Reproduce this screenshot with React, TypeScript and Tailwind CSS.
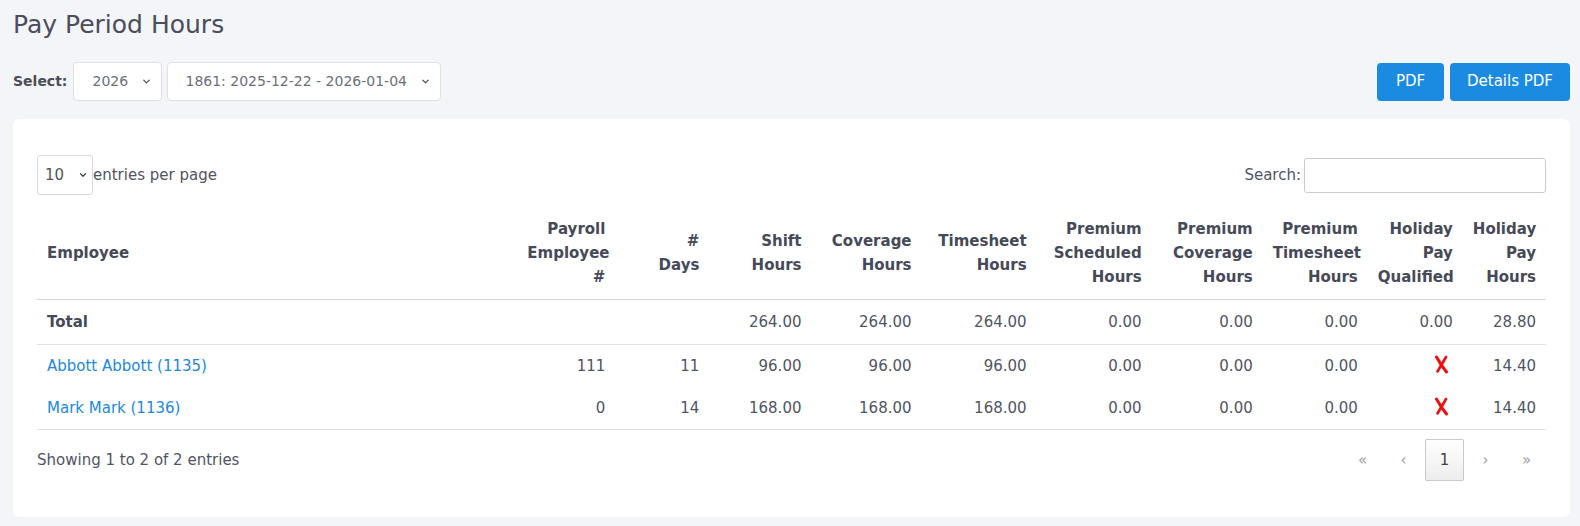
import { ChevronDown } from 'lucide-react';

const font = { fontFamily: '"DejaVu Sans", "Open Sans", sans-serif' };

const headers = [
  { lines: ['Employee'], left: true },
  { lines: ['Payroll', 'Employee', '#'] },
  { lines: ['#', 'Days'] },
  { lines: ['Shift', 'Hours'] },
  { lines: ['Coverage', 'Hours'] },
  { lines: ['Timesheet', 'Hours'] },
  { lines: ['Premium', 'Scheduled', 'Hours'] },
  { lines: ['Premium', 'Coverage', 'Hours'] },
  { lines: ['Premium', 'Timesheet', 'Hours'] },
  { lines: ['Holiday', 'Pay', 'Qualified'] },
  { lines: ['Holiday', 'Pay', 'Hours'] },
];

const widths = [480, 98, 94, 102, 110, 115, 115, 111, 105, 95, 83];

const rows = [
  { name: 'Abbott Abbott (1135)', payroll: '111', days: '11', shift: '96.00', coverage: '96.00', timesheet: '96.00', hol: '14.40' },
  { name: 'Mark Mark (1136)', payroll: '0', days: '14', shift: '168.00', coverage: '168.00', timesheet: '168.00', hol: '14.40' },
];

function RedX() {
  return (
    <svg width="15" height="19" viewBox="0 0 15 19" className="inline-block mr-[4px] align-[-3px]">
      <path d="M2.5 2 C5 6.5, 8 11.5, 12.5 17" stroke="#f20d0d" strokeWidth="3" fill="none" strokeLinecap="round" />
      <path d="M12 2 C9.5 6.5, 6.5 11.5, 3.5 16.5" stroke="#f20d0d" strokeWidth="2.6" fill="none" strokeLinecap="round" />
    </svg>
  );
}

function Select({ value, width, padLeft }: { value: string; width: string; padLeft: string }) {
  return (
    <div className={`${width} h-[39px] bg-white border border-[#dde0e5] rounded-[4px] flex items-center justify-between ${padLeft} pr-[9px] text-[#6b6f7b] text-[14px] whitespace-nowrap`}>
      <span>{value}</span>
      <ChevronDown className="w-[11px] h-[11px] text-[#555] shrink-0" strokeWidth={3} />
    </div>
  );
}

export default function App() {
  return (
    <div className="min-h-[526px] bg-[#f4f5f8] pl-[13px] pr-[10px] pb-[9px] text-[#505462]" style={font}>
      <h1 className="text-[25px] leading-[30px] pt-[10px] text-[#4a4d5a]">Pay Period Hours</h1>

      <div className="flex items-center justify-between mt-[22px]">
        <div className="flex items-center gap-[5px]">
          <span className="font-bold text-[14px] text-[#4a4d5a] mr-[1px]">Select:</span>
          <Select value="2026" width="w-[89px]" padLeft="pl-[18px]" />
          <Select value="1861: 2025-12-22 - 2026-01-04" width="w-[274px]" padLeft="pl-[17px]" />
        </div>
        <div className="flex items-center gap-[6px]">
          <button className="w-[67px] h-[38px] rounded-[4px] bg-[#1b8ae1] text-white text-[15px]">PDF</button>
          <button className="w-[120px] h-[38px] rounded-[4px] bg-[#1b8ae1] text-white text-[15px]">Details PDF</button>
        </div>
      </div>

      <div className="mt-[18px] bg-white rounded-[6px] px-6 pt-[36px] pb-[36px]">
        <div className="flex items-center justify-between">
          <div className="flex items-center">
            <div className="w-[56px] h-[40px] border border-[#d5d8dd] rounded-[3px] flex items-center justify-between pl-[7px] pr-[4px] text-[15px] text-[#555]">
              <span>10</span>
              <ChevronDown className="w-[10px] h-[10px] text-[#444]" strokeWidth={3} />
            </div>
            <span className="text-[15px] text-[#505462]">entries per page</span>
          </div>
          <div className="flex items-center gap-[3px]">
            <span className="text-[15px] text-[#505462]">Search:</span>
            <input className="w-[242px] h-[35px] border border-[#c8ccd2] rounded-[3px] outline-none" />
          </div>
        </div>

        <table className="w-full table-fixed border-collapse mt-[12px] text-[15px]">
          <colgroup>
            {widths.map((w, i) => (
              <col key={i} style={{ width: w }} />
            ))}
          </colgroup>
          <thead>
            <tr className="border-b border-[#d4d6da]">
              {headers.map((h, i) => (
                <th
                  key={i}
                  className={`px-[10px] py-[10px] align-middle font-bold leading-[24px] text-[#464a58] whitespace-nowrap ${h.left ? 'text-left' : 'text-right'}`}
                >
                  {h.lines.map((l, j) => (
                    <div key={j}>{l}</div>
                  ))}
                </th>
              ))}
            </tr>
          </thead>
          <tbody className="leading-[24px]">
            <tr className="border-b border-[#dfe1e4]">
              <td className="px-[10px] py-[10px] font-bold text-[#464a58]">Total</td>
              <td className="px-[10px]" />
              <td className="px-[10px]" />
              <td className="px-[10px] text-right">264.00</td>
              <td className="px-[10px] text-right">264.00</td>
              <td className="px-[10px] text-right">264.00</td>
              <td className="px-[10px] text-right">0.00</td>
              <td className="px-[10px] text-right">0.00</td>
              <td className="px-[10px] text-right">0.00</td>
              <td className="px-[10px] text-right">0.00</td>
              <td className="px-[10px] text-right">28.80</td>
            </tr>
            {rows.map((r, i) => (
              <tr key={r.name} className={i === rows.length - 1 ? 'border-b border-[#dfe1e4]' : ''}>
                <td className="px-[10px] py-[9px] text-[#2188de]">{r.name}</td>
                <td className="px-[10px] text-right">{r.payroll}</td>
                <td className="px-[10px] text-right">{r.days}</td>
                <td className="px-[10px] text-right">{r.shift}</td>
                <td className="px-[10px] text-right">{r.coverage}</td>
                <td className="px-[10px] text-right">{r.timesheet}</td>
                <td className="px-[10px] text-right">0.00</td>
                <td className="px-[10px] text-right">0.00</td>
                <td className="px-[10px] text-right">0.00</td>
                <td className="px-[10px] text-right">
                  <RedX />
                </td>
                <td className="px-[10px] text-right">{r.hol}</td>
              </tr>
            ))}
          </tbody>
        </table>

        <div className="flex items-center justify-between mt-[9px]">
          <span className="text-[15px] text-[#505462]">Showing 1 to 2 of 2 entries</span>
          <div className="flex items-center gap-[2px] text-[15px]">
            <span className="w-[39px] h-[42px] flex items-center justify-center text-[#9a9a9a] text-[15px]">«</span>
            <span className="w-[39px] h-[42px] flex items-center justify-center text-[#9a9a9a] text-[15px]">‹</span>
            <span className="w-[39px] h-[42px] flex items-center justify-center border border-[#c9c9c9] rounded-[2px] bg-gradient-to-b from-white to-[#ededed] text-[#444]">1</span>
            <span className="w-[39px] h-[42px] flex items-center justify-center text-[#9a9a9a] text-[15px]">›</span>
            <span className="w-[39px] h-[42px] flex items-center justify-center text-[#9a9a9a] text-[15px]">»</span>
          </div>
        </div>
      </div>
    </div>
  );
}
